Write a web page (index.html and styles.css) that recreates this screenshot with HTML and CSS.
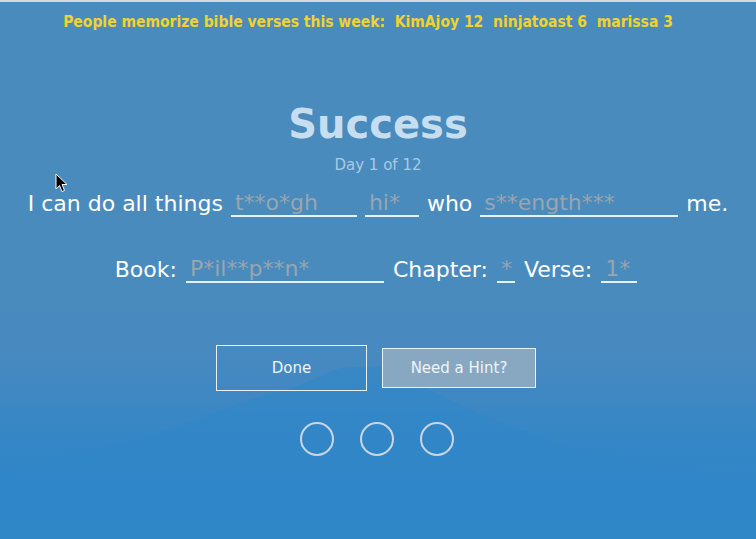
FILE: index.html
```html
<!DOCTYPE html>
<html>
<head>
<meta charset="utf-8">
<link rel="stylesheet" href="styles.css">
</head>
<body>
<div class="page">
  <svg class="mountain" width="756" height="539" viewBox="0 0 756 539">
    <path d="M0 470 L140 440 L250 400 L300 385 L340 368 L380 366 L410 380 L470 410 L560 445 L680 470 L756 480 L756 539 L0 539 Z" fill="#2f87c8" opacity="0.55"/>
  </svg>
  <div class="topline"></div>
  <div class="leaders">People memorize bible verses this week:&nbsp; KimAjoy 12 &nbsp;ninjatoast 6 &nbsp;marissa 3</div>
  <h1 class="title">Success</h1>
  <div class="day">Day 1 of 12</div>
  <div class="verse">
    <span>I can do all things</span>
    <span class="blank w126">t**o*gh</span>
    <span class="blank w54">hi*</span>
    <span>who</span>
    <span class="blank w198">s**ength***</span>
    <span>me.</span>
  </div>
  <div class="ref">
    <span>Book:</span>
    <span class="blank w198">P*il**p**n*</span>
    <span>Chapter:</span>
    <span class="blank w18">*</span>
    <span>Verse:</span>
    <span class="blank w36">1*</span>
  </div>
  <div class="buttons">
    <div class="btn done">Done</div>
    <div class="btn hint">Need a Hint?</div>
  </div>
  <div class="dots">
    <span class="dot"></span><span class="dot"></span><span class="dot"></span>
  </div>
  <svg class="cursor" width="14" height="20" viewBox="0 0 14 20">
    <path d="M1 1 L1 16 L4.5 12.5 L7 18.5 L9.5 17.5 L7 11.5 L12 11.5 Z" fill="#000" stroke="#fff" stroke-width="1"/>
  </svg>
</div>
</body>
</html>
```
FILE: styles.css
```css
html, body {
  margin: 0;
  padding: 0;
}
body {
  width: 756px;
  height: 539px;
  overflow: hidden;
  font-family: "DejaVu Sans", Verdana, sans-serif;
}
.page {
  position: relative;
  width: 756px;
  height: 539px;
  background: linear-gradient(180deg, #4a8bbd 0%, #4a8bbd 55%, #4689c1 68%, #3486c6 82%, #2f87c8 100%);
  display: flex;
  flex-direction: column;
  align-items: center;
  overflow: hidden;
}
.mountain {
  position: absolute;
  left: 0;
  top: 0;
}
.topline {
  position: absolute;
  left: 0;
  top: 0;
  width: 756px;
  height: 2px;
  background: #d9d9d9;
}
.leaders {
  position: relative;
  margin-top: 13px;
  margin-left: -20px;
  font-family: "DejaVu Sans Condensed", "DejaVu Sans", sans-serif;
  font-weight: bold;
  font-size: 15.5px;
  color: #f2d22c;
  line-height: 18px;
  white-space: nowrap;
}
.title {
  position: relative;
  margin: 69px 0 0 0;
  font-size: 40px;
  font-weight: bold;
  color: #c6def0;
  line-height: 48px;
}
.day {
  position: relative;
  font-size: 15px;
  color: #a8c9e6;
  line-height: 18px;
  margin-top: 8px;
}
.verse, .ref {
  position: relative;
  display: flex;
  align-items: flex-end;
  gap: 8px;
  font-size: 22px;
  color: #fff;
  line-height: 26px;
}
.verse {
  margin-top: 17px;
}
.ref {
  margin-top: 40px;
  gap: 9px;
  margin-left: -4px;
}
.blank {
  display: inline-block;
  color: #9aa5ae;
  border-bottom: 2px solid #e6f0f8;
  padding-left: 4px;
  box-sizing: border-box;
  line-height: 24px;
  height: 26px;
  overflow: hidden;
  white-space: nowrap;
}
.w126 { width: 126px; }
.w54 { width: 54px; }
.w198 { width: 198px; }
.w18 { width: 18px; }
.w36 { width: 36px; }
.buttons {
  position: relative;
  display: flex;
  align-items: center;
  gap: 15px;
  margin-top: 62px;
  margin-left: -4px;
}
.btn {
  box-sizing: border-box;
  display: flex;
  align-items: center;
  justify-content: center;
  color: #eef4fa;
  font-size: 15px;
  border: 1px solid #e9f1f8;
}
.done {
  width: 151px;
  height: 46px;
}
.hint {
  width: 154px;
  height: 40px;
  background: #88a8c2;
}
.dots {
  position: relative;
  display: flex;
  gap: 26px;
  margin-top: 31px;
  margin-left: -2px;
}
.dot {
  display: block;
  width: 34px;
  height: 34px;
  box-sizing: border-box;
  border: 2px solid #c9d6e2;
  border-radius: 50%;
}
.cursor {
  position: absolute;
  left: 55px;
  top: 173px;
}
```
